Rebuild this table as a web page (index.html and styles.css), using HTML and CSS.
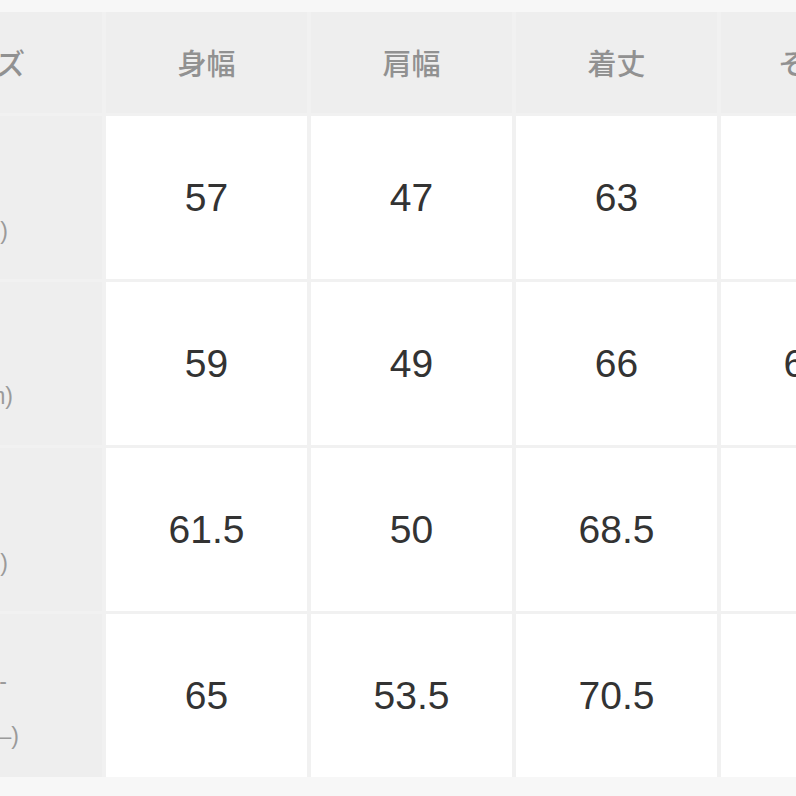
FILE: index.html
```html
<!DOCTYPE html>
<html lang="ja">
<head>
<meta charset="utf-8">
<title>サイズ表</title>
<link rel="stylesheet" href="styles.css">
</head>
<body>
<div class="sheet">
  <div class="grid">
    <div class="head label-head"><span class="head-text">サイズ</span></div>
    <div class="head"><span class="head-text">身幅</span></div>
    <div class="head"><span class="head-text">肩幅</span></div>
    <div class="head"><span class="head-text">着丈</span></div>
    <div class="head"><span class="head-text">そで丈</span></div>

    <div class="label label-r1"><span class="label-line">S(155-165cm)</span></div>
    <div class="cell">57</div>
    <div class="cell">47</div>
    <div class="cell">63</div>
    <div class="cell">60</div>

    <div class="label label-r2"><span class="label-line">M(165-175cm)</span></div>
    <div class="cell">59</div>
    <div class="cell">49</div>
    <div class="cell">66</div>
    <div class="cell">61.5</div>

    <div class="label label-r3"><span class="label-line">L(175-185)</span></div>
    <div class="cell">61.5</div>
    <div class="cell">50</div>
    <div class="cell">68.5</div>
    <div class="cell">63</div>

    <div class="label label-r4"><span class="label-line line-a">XL(180-</span><span class="label-line line-b">(185 –)</span></div>
    <div class="cell">65</div>
    <div class="cell">53.5</div>
    <div class="cell">70.5</div>
    <div class="cell">65</div>
  </div>
</div>
</body>
</html>
```
FILE: styles.css
```css
html, body {
  margin: 0;
  padding: 0;
  background: #f7f7f7;
}

body {
  width: 796px;
  height: 796px;
  overflow: hidden;
  font-family: "Liberation Sans", "Noto Sans CJK JP", sans-serif;
}

.sheet {
  padding-top: 12px;
  width: 796px;
  overflow: hidden;
}

.grid {
  display: grid;
  grid-template-columns: 102px repeat(4, 201px);
  grid-template-rows: 101px repeat(4, 163px);
  column-gap: 4px;
  row-gap: 3px;
  width: max-content;
  background: #f1f1f1;
}

.head {
  background: #eeeeee;
  display: flex;
  align-items: center;
  justify-content: center;
}

.head-text {
  font-family: "Noto Sans CJK JP", sans-serif;
  font-size: 29px;
  font-weight: 500;
  color: #919191;
  white-space: nowrap;
  margin-top: -2px;
}

.label-head {
  justify-content: flex-end;
  overflow: hidden;
  padding-right: 77px;
}

.label {
  background: #eeeeee;
  display: flex;
  flex-direction: column;
  align-items: flex-end;
  justify-content: center;
  overflow: hidden;
  font-family: "Liberation Sans", "Noto Sans CJK JP", sans-serif;
  font-size: 23px;
  color: #9a9a9a;
}

.label-line {
  white-space: nowrap;
  line-height: 30px;
}

.label-r1 { padding: 66px 94px 0 0; }
.label-r2 { padding: 64px 89px 0 0; }
.label-r3 { padding: 66px 94px 0 0; }
.label-r4 { padding: 26px 83px 0 0; }

.line-a { margin-right: 12px; margin-bottom: 25px; }

.cell {
  background: #ffffff;
  display: flex;
  align-items: center;
  justify-content: center;
  font-size: 39px;
  color: #333333;
  white-space: nowrap;
}
```
